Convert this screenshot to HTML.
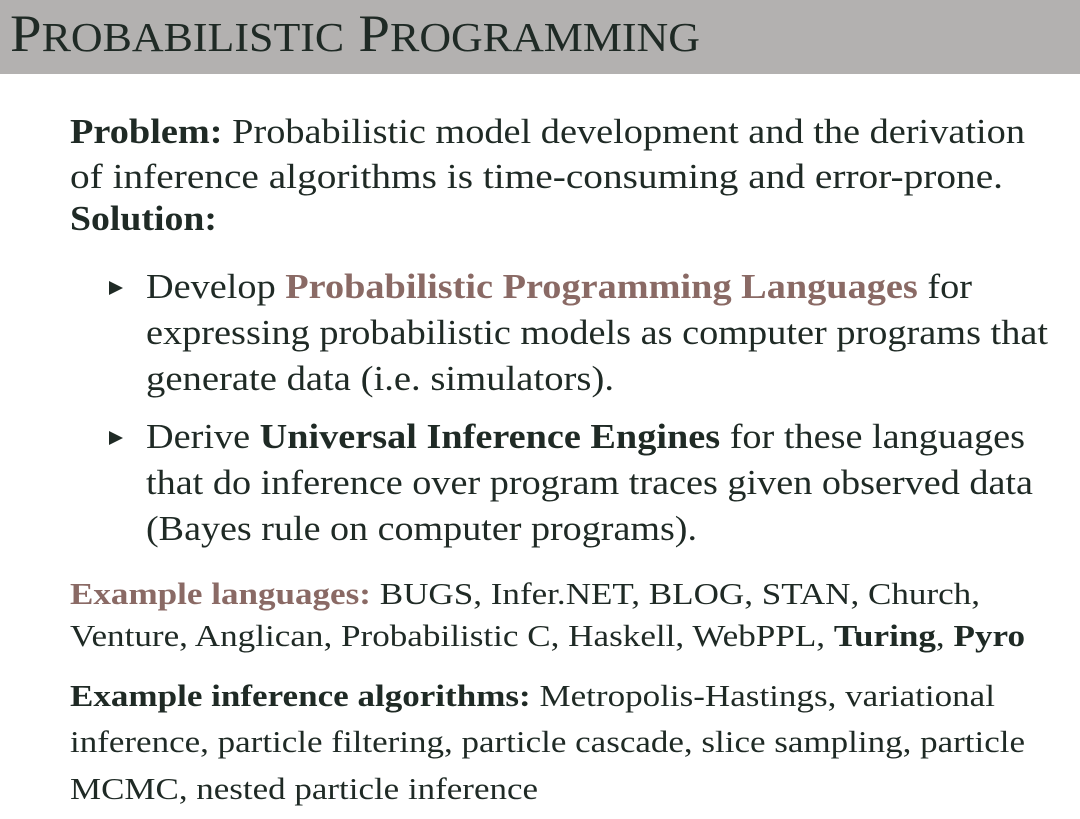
<!DOCTYPE html>
<html><head><meta charset="utf-8"><style>
html,body{margin:0;padding:0;background:#fff;width:1080px;height:819px;overflow:hidden}
svg{display:block}
text{font-family:"Liberation Serif",serif;fill:#1f2a25}
.b{font-weight:bold}
.a{fill:#8a6a65;font-weight:bold}
</style></head><body>
<svg width="1080" height="819" viewBox="0 0 1080 819">
<rect x="0" y="0" width="1080" height="74" fill="#b3b1b0"/>
<text x="10" y="51" font-size="53" textLength="690" lengthAdjust="spacingAndGlyphs">P<tspan font-size="41">ROBABILISTIC</tspan> P<tspan font-size="41">ROGRAMMING</tspan></text>
<g font-size="35">
<text x="70" y="143" textLength="955" lengthAdjust="spacingAndGlyphs"><tspan class="b">Problem:</tspan> Probabilistic model development and the derivation</text>
<text x="70" y="188" textLength="933" lengthAdjust="spacingAndGlyphs">of inference algorithms is time-consuming and error-prone.</text>
<text x="70" y="230" class="b" textLength="147" lengthAdjust="spacingAndGlyphs">Solution:</text>
<polygon points="109,281 123,288 109,295" fill="#1f2a25"/>
<text x="146" y="298" textLength="826" lengthAdjust="spacingAndGlyphs">Develop <tspan class="a">Probabilistic Programming Languages</tspan> for</text>
<text x="146" y="344" textLength="902" lengthAdjust="spacingAndGlyphs">expressing probabilistic models as computer programs that</text>
<text x="146" y="390" textLength="468" lengthAdjust="spacingAndGlyphs">generate data (i.e. simulators).</text>
<polygon points="109,431 123,438 109,445" fill="#1f2a25"/>
<text x="146" y="448" textLength="879" lengthAdjust="spacingAndGlyphs">Derive <tspan class="b">Universal Inference Engines</tspan> for these languages</text>
<text x="146" y="494" textLength="887" lengthAdjust="spacingAndGlyphs">that do inference over program traces given observed data</text>
<text x="146" y="540" textLength="551" lengthAdjust="spacingAndGlyphs">(Bayes rule on computer programs).</text>
</g>
<g font-size="31">
<text x="70" y="604" textLength="910" lengthAdjust="spacingAndGlyphs"><tspan class="a">Example languages:</tspan> BUGS, Infer.NET, BLOG, STAN, Church,</text>
<text x="70" y="646" textLength="955" lengthAdjust="spacingAndGlyphs">Venture, Anglican, Probabilistic C, Haskell, WebPPL, <tspan class="b">Turing</tspan>, <tspan class="b">Pyro</tspan></text>
<text x="70" y="706" textLength="925" lengthAdjust="spacingAndGlyphs"><tspan class="b">Example inference algorithms:</tspan> Metropolis-Hastings, variational</text>
<text x="70" y="752" textLength="955" lengthAdjust="spacingAndGlyphs">inference, particle filtering, particle cascade, slice sampling, particle</text>
<text x="70" y="799" textLength="468" lengthAdjust="spacingAndGlyphs">MCMC, nested particle inference</text>
</g>
</svg>
</body></html>
